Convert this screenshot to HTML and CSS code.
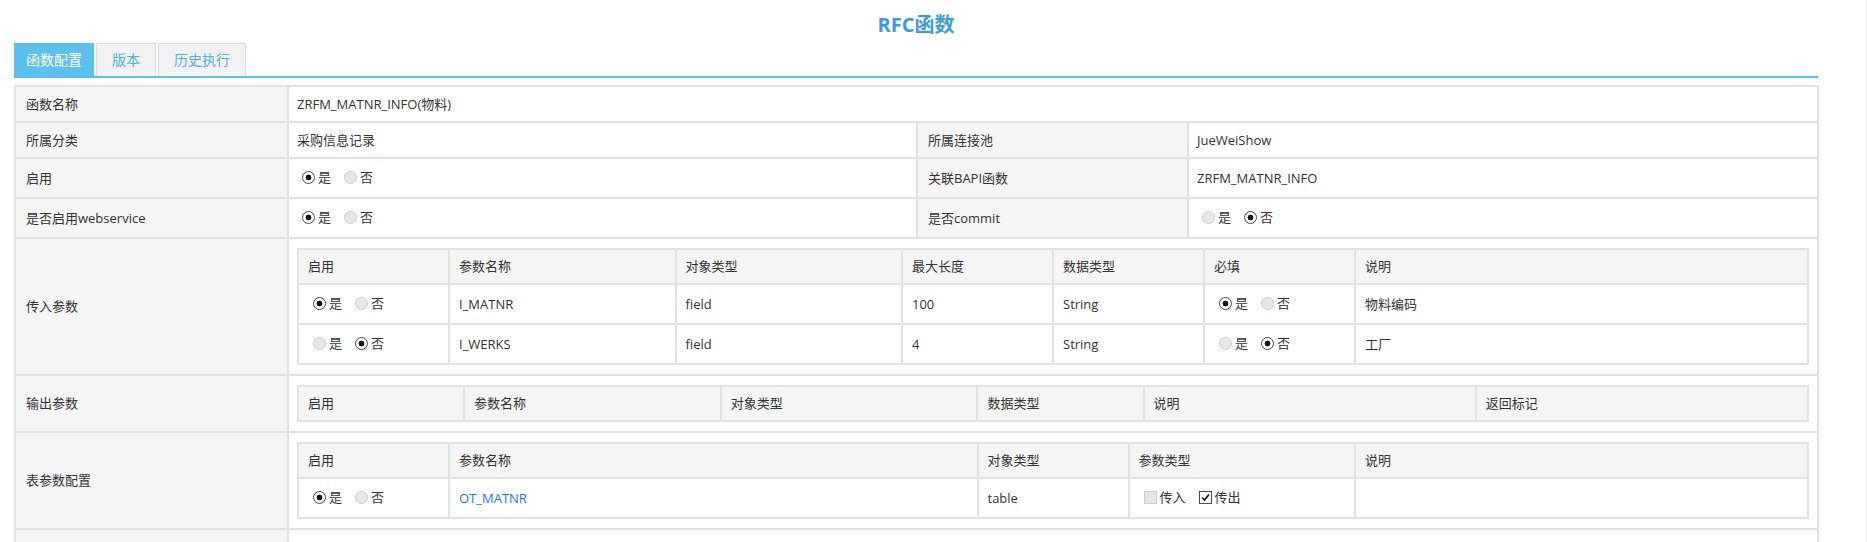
FILE: index.html
```html
<!DOCTYPE html>
<html lang="zh-CN">
<head>
<meta charset="utf-8">
<title>RFC函数</title>
<link rel="stylesheet" href="styles.css">
</head>
<body>
<div class="page">
  <h1 class="title">RFC函数</h1>
  <div class="tabs">
    <div class="tab active t1">函数配置</div>
    <div class="tab t2">版本</div>
    <div class="tab t3">历史执行</div>
  </div>
  <table class="form">
    <colgroup><col class="cl1"><col class="cv1"><col class="cl2"><col class="cv2"></colgroup>
    <tr class="h36"><td class="lb">函数名称</td><td colspan="3">ZRFM_MATNR_INFO(物料)</td></tr>
    <tr class="h37"><td class="lb">所属分类</td><td>采购信息记录</td><td class="lb">所属连接池</td><td>JueWeiShow</td></tr>
    <tr class="h40"><td class="lb">启用</td><td><span class="opt"><i class="rd on"></i>是</span><span class="opt"><i class="rd"></i>否</span></td><td class="lb">关联BAPI函数</td><td>ZRFM_MATNR_INFO</td></tr>
    <tr class="h41"><td class="lb">是否启用webservice</td><td><span class="opt"><i class="rd on"></i>是</span><span class="opt"><i class="rd"></i>否</span></td><td class="lb">是否commit</td><td><span class="opt"><i class="rd"></i>是</span><span class="opt"><i class="rd on"></i>否</span></td></tr>
    <tr>
      <td class="lb">传入参数</td>
      <td colspan="3" class="nest">
        <table class="sub">
          <colgroup><col class="p10"><col class="p15"><col class="p15"><col class="p10"><col class="p10"><col class="p10"><col class="p30"></colgroup>
          <tr class="hd"><th>启用</th><th>参数名称</th><th>对象类型</th><th>最大长度</th><th>数据类型</th><th>必填</th><th>说明</th></tr>
          <tr class="bd"><td><span class="opt"><i class="rd on"></i>是</span><span class="opt"><i class="rd"></i>否</span></td><td>I_MATNR</td><td>field</td><td>100</td><td>String</td><td><span class="opt"><i class="rd on"></i>是</span><span class="opt"><i class="rd"></i>否</span></td><td>物料编码</td></tr>
          <tr class="bd"><td><span class="opt"><i class="rd"></i>是</span><span class="opt"><i class="rd on"></i>否</span></td><td>I_WERKS</td><td>field</td><td>4</td><td>String</td><td><span class="opt"><i class="rd"></i>是</span><span class="opt"><i class="rd on"></i>否</span></td><td>工厂</td></tr>
        </table>
      </td>
    </tr>
    <tr>
      <td class="lb">输出参数</td>
      <td colspan="3" class="nest">
        <table class="sub">
          <colgroup><col class="p11"><col class="p17"><col class="p17"><col class="p11"><col class="p22"><col class="p22"></colgroup>
          <tr class="hd"><th>启用</th><th>参数名称</th><th>对象类型</th><th>数据类型</th><th>说明</th><th>返回标记</th></tr>
        </table>
      </td>
    </tr>
    <tr>
      <td class="lb">表参数配置</td>
      <td colspan="3" class="nest">
        <table class="sub">
          <colgroup><col class="p10"><col class="p35"><col class="p10"><col class="p15"><col class="p30"></colgroup>
          <tr class="hd"><th>启用</th><th>参数名称</th><th>对象类型</th><th>参数类型</th><th>说明</th></tr>
          <tr class="bd"><td><span class="opt"><i class="rd on"></i>是</span><span class="opt"><i class="rd"></i>否</span></td><td><a class="link" href="#">OT_MATNR</a></td><td>table</td><td><span class="opt"><i class="cb"></i>传入</span><span class="opt"><i class="cb on"><svg viewBox="0 0 11 11" width="11" height="11"><path d="M2 5.5 L4.5 8 L9 2.5" fill="none" stroke="#111" stroke-width="1.6"/></svg></i>传出</span></td><td></td></tr>
        </table>
      </td>
    </tr>
    <tr class="h40"><td class="lb">备注</td><td colspan="3"></td></tr>
  </table>
</div>
</body>
</html>
```

FILE: styles.css
```css
html, body {
  margin: 0;
  padding: 0;
}
body {
  background: #fff;
  font-family: "Open Sans", "Noto Sans CJK SC", sans-serif;
  font-size: 13px;
  color: #333;
  min-height: 100vh;
  border-right: 1px solid #ececec;
  box-sizing: border-box;
}
.page {
  width: 1804px;
  margin-left: 14px;
}
.title {
  margin: 0;
  box-sizing: border-box;
  height: 43px;
  padding-top: 12px;
  line-height: 26px;
  font-size: 20px;
  font-weight: bold;
  color: #3d9cd4;
  text-align: center;
}
.tabs {
  display: flex;
  height: 33px;
  border-bottom: 2px solid #5bc0ee;
}
.tab {
  box-sizing: border-box;
  height: 33px;
  line-height: 31px;
  font-size: 14px;
  text-align: center;
  margin-right: 2px;
  background: #f2f2f2;
  border: 1px solid #dcdcdc;
  border-bottom: none;
  color: #4cb2e4;
}
.tab.active {
  background: #5bc0ee;
  border-color: #5bc0ee;
  color: #fff;
}
.t1 { width: 80px; }
.t2 { width: 60px; }
.t3 { width: 88px; }

.form {
  margin-top: 7px;
  width: 1804px;
  border-collapse: collapse;
  table-layout: fixed;
  border: 2px solid #ececec;
}
.cl1 { width: 273px; }
.cv1 { width: 629px; }
.cl2 { width: 271px; }
.cv2 { width: 630px; }
.form > tbody > tr > td {
  border: 2px solid #e2e2e2;
  padding: 0 8px;
  vertical-align: middle;
  line-height: 19px;
  white-space: nowrap;
}
.form > tbody > tr > td.lb {
  background: #f5f5f5;
  padding-left: 10px;
}
.form > tbody > tr > td.nest {
  padding: 9px 8px;
}
.h36 { height: 36px; }
.h37 { height: 36px; }
.h40 { height: 40px; }
.h41 { height: 40px; }

.sub {
  width: 100%;
  border-collapse: collapse;
  table-layout: fixed;
  border: 2px solid #ececec;
}
.sub th, .sub td {
  border: 2px solid #e2e2e2;
  padding: 0 9px;
  text-align: left;
  font-weight: normal;
  vertical-align: middle;
  line-height: 19px;
  white-space: nowrap;
}
.sub .hd { height: 35px; }
.sub .hd th { background: #f5f5f5; }
.sub .bd { height: 40px; }
.p10 { width: 10%; }
.p11 { width: 11%; }
.p15 { width: 15%; }
.p17 { width: 17%; }
.p22 { width: 22%; }
.p30 { width: 30%; }
.p35 { width: 35%; }

.opt {
  display: inline-flex;
  align-items: center;
  margin-right: 8px;
}
.rd, .cb {
  display: inline-block;
  box-sizing: border-box;
  width: 13px;
  height: 13px;
  margin: 0 3px 0 5px;
  background: #e6e6e6;
  border: 1px solid #cdcdcd;
  position: relative;
}
.rd { border-radius: 50%; }
.rd.on {
  background: radial-gradient(circle, #111 0, #111 2.6px, #fff 3.2px);
  border: 1px solid #4a4a4a;
}
.cb.on {
  background: #fff;
  border: 1px solid #4a4a4a;
}
.cb svg {
  display: block;
  width: 11px;
  height: 11px;
}
.link {
  color: #1f7ae0;
  text-decoration: none;
}
```
